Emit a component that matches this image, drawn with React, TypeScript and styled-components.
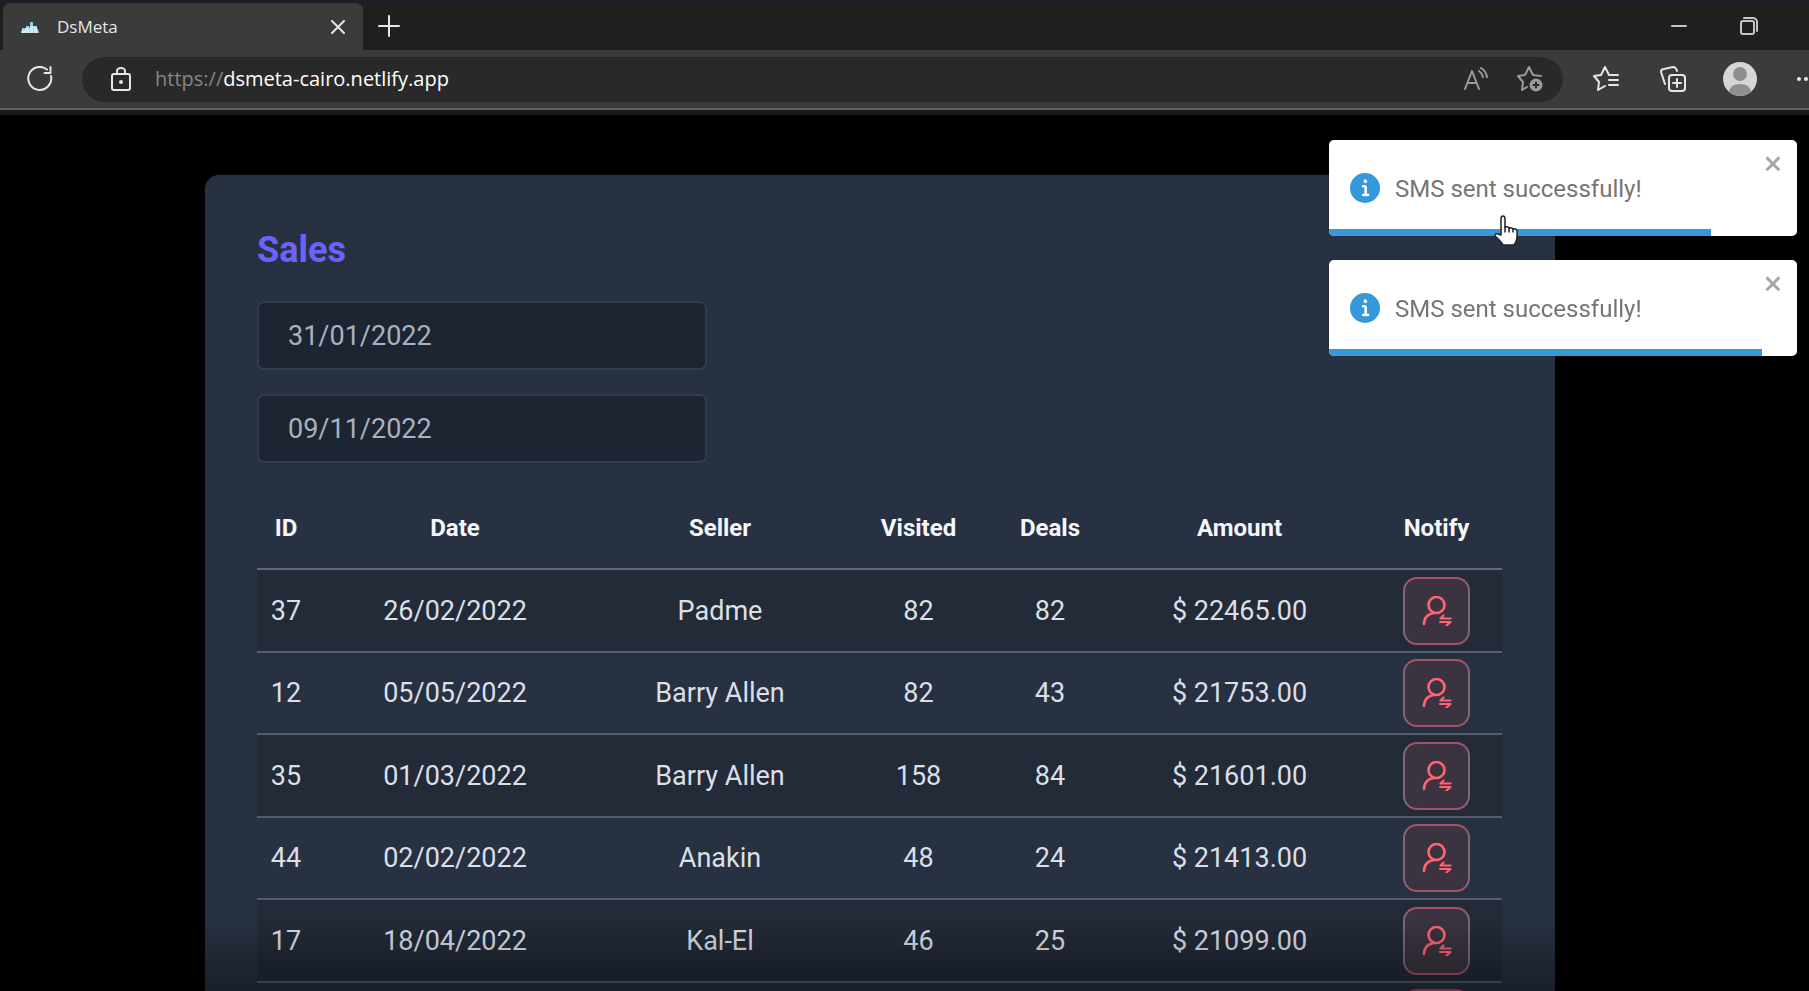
import React from "react";
import styled, { createGlobalStyle } from "styled-components";

const GlobalStyle = createGlobalStyle`
  *, *::before, *::after { box-sizing: border-box; }
  html, body, #root { height: 100%; }
  body {
    margin: 0;
    overflow: hidden;
    background: #000;
    font-family: Roboto, "Liberation Sans", sans-serif;
  }
  button, input { font: inherit; color: inherit; }
`;

const Window = styled.div`
  height: 100vh;
  display: flex;
  flex-direction: column;
  overflow: hidden;
`;

/* Browser chrome */

const Chrome = styled.header`
  flex: none;
  display: flex;
  flex-direction: column;
  background: #3b3b3b;
  border-bottom: 5px solid #191919;
  color: #e6e6e6;
  font-family: "Open Sans", "Noto Sans", sans-serif;
`;

const TabStrip = styled.div`
  display: flex;
  height: 50px;
  padding-left: 3px;
  background: #1f1f1f;
  border-top: 3px solid #1b1e24;
`;

const Tab = styled.div`
  display: flex;
  align-items: center;
  width: 360px;
  padding: 0 13px 0 18px;
  gap: 18px;
  border-radius: 8px 8px 0 0;
  background: #3b3b3b;
  font-size: 17px;
  line-height: 24px;
`;

const TabTitle = styled.span`
  flex: 1;
`;

const BareButton = styled.button<{ $w?: number }>`
  flex: none;
  display: flex;
  align-items: center;
  justify-content: center;
  width: ${(p) => p.$w ?? 24}px;
  height: 46px;
  padding: 0;
  border: 0;
  background: none;
  color: inherit;
  cursor: pointer;
`;

const WindowControls = styled.div`
  display: flex;
  margin-left: auto;
  padding-right: 25px;
  color: #c4c4c4;
`;

const Toolbar = styled.div`
  display: flex;
  align-items: center;
  height: 60px;
  padding-left: 16px;
  border-bottom: 2px solid #626262;
`;

const AddressBar = styled.form`
  flex: 1;
  display: flex;
  align-items: center;
  height: 45px;
  margin: 0 20px 0 18px;
  padding: 0 12px 0 27px;
  border-radius: 23px;
  background: #292929;
  color: #e6e6e6;
`;

const Url = styled.a`
  flex: 1;
  margin-left: 22px;
  color: #fff;
  font-size: 20px;
  line-height: 28px;
  text-decoration: none;
`;

const Scheme = styled.span`
  color: #868686;
`;

const Dim = styled.span`
  display: flex;
  gap: 12px;
  color: #9a9a9a;
`;

const ToolbarActions = styled.div`
  flex: none;
  display: flex;
  align-items: center;
  width: 226px;
  gap: 21px;
  overflow: hidden;
`;

/* Page */

const Page = styled.main`
  flex: 1;
  min-height: 0;
  overflow: hidden;
  padding: 60px 254px 0 205px;
`;

const Card = styled.section`
  padding: 52px 53px 52px 52px;
  border-radius: 14px;
  background: #283142;
`;

const Title = styled.h1`
  margin: 0 0 28px;
  color: #6c63ff;
  font-size: 36px;
  line-height: 46px;
  font-weight: 700;
`;

const DateInput = styled.input`
  display: block;
  width: 450px;
  height: 69px;
  margin-bottom: 24px;
  padding: 0 29px;
  border: 2px solid #313c4e;
  border-radius: 7px;
  background: #1c2531;
  color: #a9b2be;
  font-size: 27px;
`;

const Table = styled.table`
  width: 100%;
  margin-top: 24px;
  border-collapse: separate;
  border-spacing: 0;
  table-layout: fixed;
  color: #dbdfe6;
  text-align: center;
  font-size: 27px;
  line-height: 36px;
`;

const Th = styled.th`
  height: 83px;
  padding: 0;
  border-bottom: 2px solid #5f6979;
  color: #f4f6fa;
  font-size: 24px;
  font-weight: 700;
`;

const Row = styled.tr`
  height: 82px;
  &:nth-child(odd) {
    height: 83px;
    background: #232b39;
  }
`;

const Td = styled.td`
  padding: 0;
  border-bottom: 2px solid #545d6d;
`;

const NotifyButton = styled.button`
  display: flex;
  align-items: center;
  justify-content: center;
  width: 67px;
  height: 68px;
  margin: 0 auto;
  padding: 0;
  border: 2px solid;
  border-color: #a8516a #80667a;
  border-radius: 14px;
  background: #3b3340;
  color: #ff6374;
  cursor: pointer;
`;

const BottomShade = styled.div`
  position: fixed;
  inset: auto 0 0;
  height: 72px;
  background: linear-gradient(transparent, rgba(0, 0, 0, 0.36));
  pointer-events: none;
`;

/* Toasts */

const Toasts = styled.aside`
  position: fixed;
  top: 140px;
  right: 12px;
  display: flex;
  flex-direction: column;
  gap: 24px;
  width: 468px;
`;

const Toast = styled.div`
  position: relative;
  display: flex;
  align-items: center;
  height: 96px;
  padding: 0 13px 0 21px;
  gap: 15px;
  border-radius: 5px;
  overflow: hidden;
  background: #fff;
  color: #757575;
  font-size: 24px;
  line-height: 32px;
`;

const ToastText = styled.span`
  flex: 1;
  padding-top: 2px;
`;

const CloseToast = styled.button`
  align-self: flex-start;
  margin-top: 12px;
  padding: 0;
  border: 0;
  background: none;
  color: #a6a6a6;
  line-height: 0;
  cursor: pointer;
`;

const Progress = styled.div`
  position: absolute;
  left: 0;
  bottom: 0;
  height: 7px;
  background: #3498db;
`;

const Pointer = styled.svg`
  position: fixed;
  top: 215px;
  left: 1493px;
`;

/* Icons */

const Stroke = ({ size, children, w = 2 }: { size: number; w?: number; children: React.ReactNode }) => (
  <svg width={size} height={size} viewBox={`0 0 ${size} ${size}`} fill="none" stroke="currentColor" strokeWidth={w} strokeLinecap="round" strokeLinejoin="round" aria-hidden="true">
    {children}
  </svg>
);

const Favicon = () => (
  <svg width="18" height="18" viewBox="0 0 18 18" aria-hidden="true">
    <path d="M1 15v-5h4v5zM5 15V8h3v7zM9 15V4h3v11zM13 15V8h3v7z" fill="#8ccbe8" />
    <path d="M0 15q0-4 4-3 1-4 4-2 1-3 5-2 4 1 5 7z" fill="#dff3fb" opacity=".8" />
  </svg>
);

const NotifyIcon = () => (
  <Stroke size={30} w={2.6}>
    <circle cx="14.500" cy="9" r="8" />
    <path d="M2 28c0-6 4-10.500 10-11" />
    <path d="M18.500 22.500h10M21.500 19.500l-3 3M18 26h10.500l-4 3.500" strokeWidth="2.200" />
  </Stroke>
);

const InfoIcon = () => (
  <svg width="30" height="30" viewBox="0 0 24 24" fill="#3498db" aria-hidden="true">
    <path d="M12 0a12 12 0 1012 12A12.013 12.013 0 0012 0zm.25 5a1.500 1.500 0 11-1.500 1.500 1.500 1.500 0 011.500-1.500zm2.250 13.500h-4a1 1 0 010-2h.75a.25.25 0 00.25-.25v-4.500a.25.25 0 00-.25-.25h-.75a1 1 0 010-2h1a2 2 0 012 2v4.750a.25.25 0 00.25.25h.75a1 1 0 110 2z" />
  </svg>
);

const columns = [
  { label: "ID", width: 58 },
  { label: "Date", width: 280 },
  { label: "Seller", width: 250 },
  { label: "Visited", width: 147 },
  { label: "Deals", width: 116 },
  { label: "Amount", width: 263 },
  { label: "Notify", width: 131 },
];

const sales = [
  { id: 37, date: "26/02/2022", seller: "Padme", visited: 82, deals: 82, amount: 22465 },
  { id: 12, date: "05/05/2022", seller: "Barry Allen", visited: 82, deals: 43, amount: 21753 },
  { id: 35, date: "01/03/2022", seller: "Barry Allen", visited: 158, deals: 84, amount: 21601 },
  { id: 44, date: "02/02/2022", seller: "Anakin", visited: 48, deals: 24, amount: 21413 },
  { id: 17, date: "18/04/2022", seller: "Kal-El", visited: 46, deals: 25, amount: 21099 },
];

const toasts = [
  { id: 1, progress: 81.6 },
  { id: 2, progress: 92.6 },
];

export default function App() {
  return (
    <Window>
      <GlobalStyle />
      <Chrome>
        <TabStrip>
          <Tab>
            <Favicon />
            <TabTitle>DsMeta</TabTitle>
            <BareButton aria-label="Close tab">
              <Stroke size={14}><path d="M1 1l12 12M13 1L1 13" /></Stroke>
            </BareButton>
          </Tab>
          <BareButton $w={52} aria-label="New tab">
            <Stroke size={22}><path d="M11 1v20M1 11h20" /></Stroke>
          </BareButton>
          <WindowControls>
            <BareButton $w={70} aria-label="Minimize">
              <Stroke size={16}><path d="M1 8h14" /></Stroke>
            </BareButton>
            <BareButton $w={70} aria-label="Restore">
              <Stroke size={18}>
                <rect x="1" y="4" width="13" height="13" rx="2" />
                <path d="M4 1h9a4 4 0 0 1 4 4v9" />
              </Stroke>
            </BareButton>
          </WindowControls>
        </TabStrip>
        <Toolbar>
          <BareButton $w={48} aria-label="Refresh">
            <Stroke size={26}>
              <path d="M24 10a11.500 11.500 0 1 1-4-6.500M23.500 1v6h-6" />
            </Stroke>
          </BareButton>
          <AddressBar>
            <BareButton type="button" aria-label="Site information">
              <Stroke size={24}>
                <rect x="3" y="7" width="18" height="16" rx="2" />
                <path d="M8 7V4a4 3 0 0 1 8 0v3" />
                <circle cx="12" cy="15" r="1" fill="currentColor" />
              </Stroke>
            </BareButton>
            <Url href="https://dsmeta-cairo.netlify.app">
              <Scheme>https://</Scheme>dsmeta-cairo.netlify.app
            </Url>
            <Dim>
              <BareButton type="button" $w={42} aria-label="Read aloud">
                <Stroke size={24}>
                  <path d="M1 22L8 4l7 18M3.500 16h9M15 4q3 2 4 6M17 1q5 3 6 9" />
                </Stroke>
              </BareButton>
              <BareButton type="button" $w={42} aria-label="Add to favorites">
                <Stroke size={26}>
                  <path d="M10 21l-5 3 1-8-5-6 7-1 4-8 4 8 8 1" />
                  <circle cx="19" cy="19" r="6.500" fill="currentColor" stroke="none" />
                  <path d="M19 16.500v5M16.500 19h5" stroke="#292929" />
                </Stroke>
              </BareButton>
            </Dim>
          </AddressBar>
          <ToolbarActions>
            <BareButton $w={46} aria-label="Favorites">
              <Stroke size={26}>
                <path d="M12 20l-7 4 1-8-5-6 7-1 4-8 4 8h9M16 14h9M16 19h9" />
              </Stroke>
            </BareButton>
            <BareButton $w={46} aria-label="Collections">
              <Stroke size={26}>
                <rect x="9" y="9" width="16" height="16" rx="3" />
                <path d="M17 13v8M13 17h8M5 18L1 6q0-3 3-3l9-2q3 0 4 4" />
              </Stroke>
            </BareButton>
            <BareButton $w={46} aria-label="Profile">
              <svg width="34" height="34" viewBox="0 0 34 34" aria-hidden="true">
                <circle cx="17" cy="17" r="17" fill="#d6d6d6" />
                <circle cx="17" cy="12" r="7" fill="#8e8e8e" />
                <path d="M6 30q1-8 11-8t11 8q-5 4-11 4T6 30z" fill="#8e8e8e" />
              </svg>
            </BareButton>
            <BareButton $w={28} aria-label="Settings and more">
              <svg width="28" height="6" viewBox="0 0 28 6" fill="currentColor" aria-hidden="true">
                <circle cx="15" cy="3" r="2" />
                <circle cx="22" cy="3" r="2" />
              </svg>
            </BareButton>
          </ToolbarActions>
        </Toolbar>
      </Chrome>

      <Page>
        <Card>
          <Title>Sales</Title>
          <DateInput aria-label="Start date" defaultValue="31/01/2022" />
          <DateInput aria-label="End date" defaultValue="09/11/2022" />
          <Table>
            <colgroup>
              {columns.map((c) => <col key={c.label} width={c.width} />)}
            </colgroup>
            <thead>
              <tr>{columns.map((c) => <Th key={c.label} scope="col">{c.label}</Th>)}</tr>
            </thead>
            <tbody>
              {sales.map((s) => (
                <Row key={s.id}>
                  <Td>{s.id}</Td>
                  <Td>{s.date}</Td>
                  <Td>{s.seller}</Td>
                  <Td>{s.visited}</Td>
                  <Td>{s.deals}</Td>
                  <Td>$ {s.amount.toFixed(2)}</Td>
                  <Td>
                    <NotifyButton aria-label={`Notify ${s.seller}`}><NotifyIcon /></NotifyButton>
                  </Td>
                </Row>
              ))}
              <Row>
                <Td colSpan={6} />
                <Td>
                  <NotifyButton aria-label="Notify"><NotifyIcon /></NotifyButton>
                </Td>
              </Row>
            </tbody>
          </Table>
        </Card>
      </Page>
      <BottomShade />

      <Toasts aria-live="polite">
        {toasts.map((t) => (
          <Toast key={t.id} role="status">
            <InfoIcon />
            <ToastText>SMS sent successfully!</ToastText>
            <CloseToast aria-label="Close notification">
              <svg width="20" height="23" viewBox="0 0 14 16" fill="currentColor" aria-hidden="true">
                <path d="M7.710 8.230l3.750 3.750-1.480 1.480-3.750-3.750-3.750 3.750L1 11.980l3.750-3.750L1 4.480 2.480 3l3.750 3.750L9.980 3l1.480 1.480-3.750 3.750z" />
              </svg>
            </CloseToast>
            <Progress style={{ width: `${t.progress}%` }} />
          </Toast>
        ))}
      </Toasts>
      <Pointer width="26" height="32" viewBox="0 0 26 32" fill="#fff" stroke="#222" strokeWidth="1.500" strokeLinejoin="round" aria-hidden="true">
        <path d="M8 20V4q0-3 2-3t2 3v8q3-1 4 1 3-1 4 1 3-1 4 2v6q0 4-3 8H10q-2-4-8-9 0-3 3-2z" />
        <path d="M12 12v5M16 13v4M20 14v3" fill="none" strokeLinecap="round" />
      </Pointer>
    </Window>
  );
}
